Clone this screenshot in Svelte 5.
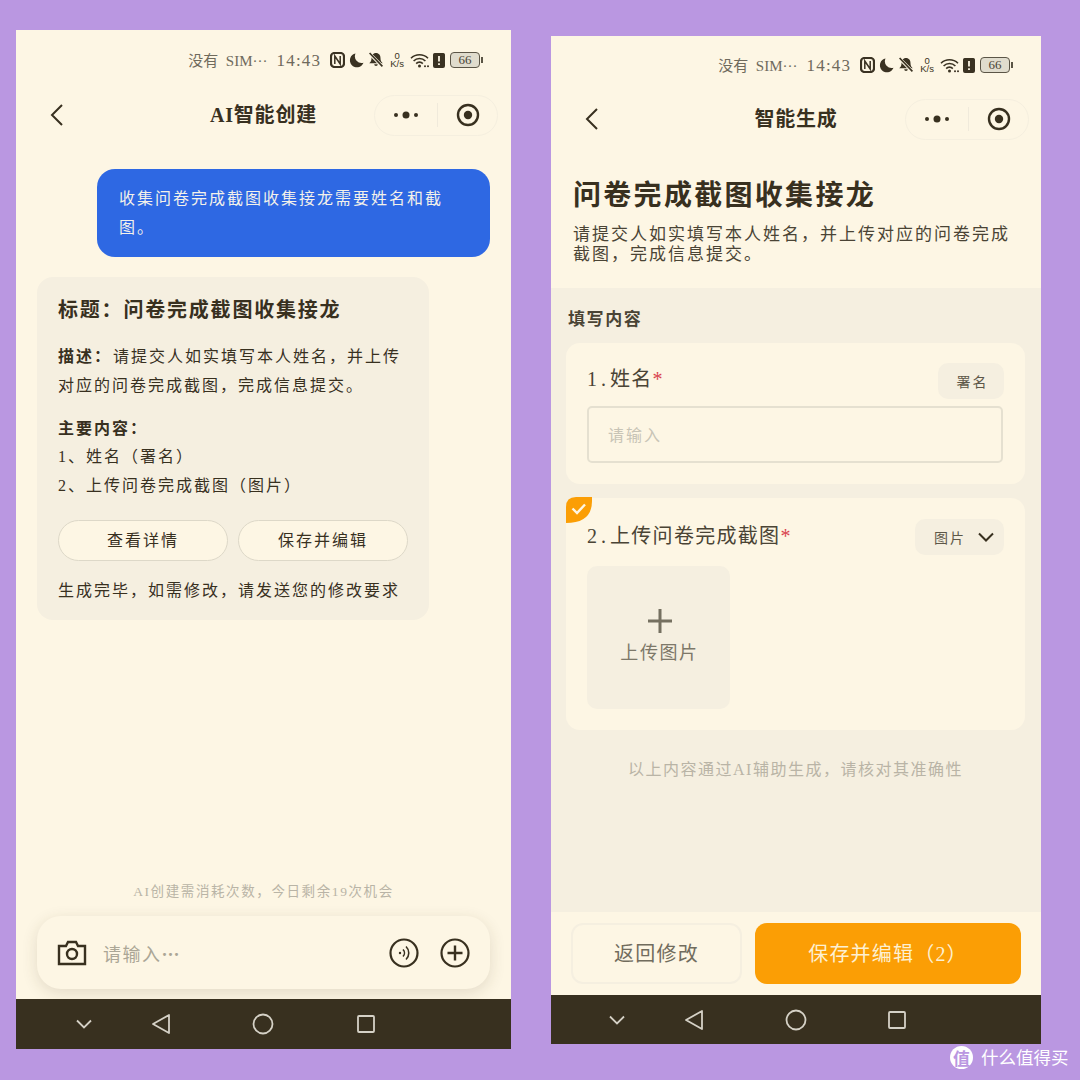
<script>
  const contents = ['1、姓名（署名）', '2、上传问卷完成截图（图片）'];
</script>

{#snippet statusBar()}
  <div class="status">
    <span class="carrier">没有&nbsp; SIM···</span>
    <span class="clock">14:43</span>
    <svg class="st" width="15" height="16" viewBox="0 0 15 16">
      <rect x="1" y="1" width="13" height="14" rx="3.500" fill="none" stroke="#3a3222" stroke-width="2.200" />
      <path d="M4.800 12V4l5.400 8V4" fill="none" stroke="#3a3222" stroke-width="1.500" />
    </svg>
    <svg class="st" width="15" height="15" viewBox="0 0 15 15">
      <path d="M6.500 .5a7 7 0 1 0 8 9.300A6.800 6.800 0 0 1 6.500 .5z" fill="#3a3222" />
    </svg>
    <svg class="st" width="16" height="16" viewBox="0 0 15 15">
      <path d="M7.500 1c-2.800 0-4.200 2.200-4.200 4.600 0 2.500-.8 3.700-2.100 4.900h12.600c-1.300-1.200-2.100-2.400-2.100-4.900C11.700 3.200 10.300 1 7.500 1zM5.800 11.500h3.400a1.700 1.700 0 0 1-3.400 0z" fill="#3a3222" />
      <path d="M1.500 1.500l12 12" stroke="#fdf6e4" stroke-width="3" />
      <path d="M1.500 1l12 12.500" stroke="#3a3222" stroke-width="1.500" />
    </svg>
    <span class="speed">0<br />K/s</span>
    <svg class="st" width="19" height="15" viewBox="0 0 19 15">
      <path d="M1 5.300a12 12 0 0 1 17 0M3.600 8a8.200 8.200 0 0 1 11.800 0M6.200 10.600a4.400 4.400 0 0 1 6.600 0" fill="none" stroke="#3a3222" stroke-width="1.600" />
      <circle cx="9.500" cy="13" r="1.500" fill="#3a3222" />
      <circle cx="15" cy="13.300" r="1" fill="#3a3222" />
      <circle cx="18" cy="13.300" r="1" fill="#3a3222" />
    </svg>
    <svg class="st" width="12" height="15" viewBox="0 0 12 15">
      <path d="M2.500 0h7A2 2 0 0 1 12 2v11a2 2 0 0 1-2 2H2a2 2 0 0 1-2-2V2A2 2 0 0 1 2.500 0z" fill="#3a3222" />
      <path d="M6 3v5.500M6 10.300v1.800" stroke="#fdf6e4" stroke-width="1.800" />
    </svg>
    <span class="battery"><span class="level">66</span></span>
  </div>
{/snippet}

{#snippet navBar(title)}
  <div class="nav">
    <svg class="back" width="14" height="24" viewBox="0 0 14 24">
      <path d="M12 2L2 12l10 10" fill="none" stroke="#38301f" stroke-width="2" />
    </svg>
    <h1>{title}</h1>
    <div class="capsule">
      <svg width="26" height="10" viewBox="0 0 26 10">
        <circle cx="3" cy="5" r="2" fill="#38301f" />
        <circle cx="13" cy="5" r="3.500" fill="#38301f" />
        <circle cx="23" cy="5" r="2" fill="#38301f" />
      </svg>
      <i class="sep"></i>
      <svg width="24" height="24" viewBox="0 0 24 24">
        <circle cx="12" cy="12" r="10" fill="none" stroke="#38301f" stroke-width="2.400" />
        <circle cx="12" cy="12" r="4.200" fill="#38301f" />
      </svg>
    </div>
  </div>
{/snippet}

{#snippet sysNav()}
  <div class="sysnav">
    <svg width="18" height="12" viewBox="0 0 18 12">
      <path d="M2 2.500l7 7 7-7" fill="none" stroke="#d5d1c6" stroke-width="1.800" />
    </svg>
    <svg width="20" height="22" viewBox="0 0 20 22">
      <path d="M18 2v18L2 11z" fill="none" stroke="#d5d1c6" stroke-width="1.800" stroke-linejoin="round" />
    </svg>
    <svg width="22" height="22" viewBox="0 0 22 22">
      <circle cx="11" cy="11" r="9.500" fill="none" stroke="#d5d1c6" stroke-width="1.800" />
    </svg>
    <svg width="20" height="20" viewBox="0 0 20 20">
      <rect x="2" y="2" width="16" height="16" rx="1" fill="none" stroke="#d5d1c6" stroke-width="1.800" />
    </svg>
  </div>
{/snippet}

<div class="page">
  <section class="phone chat">
    {@render statusBar()}
    {@render navBar('AI智能创建')}
    <main class="thread">
      <div class="bubble">收集问卷完成截图收集接龙需要姓名和截图。</div>
      <article class="reply">
        <h2>标题：问卷完成截图收集接龙</h2>
        <p class="desc"><b>描述：</b>请提交人如实填写本人姓名，并上传对应的问卷完成截图，完成信息提交。</p>
        <p class="list-title"><b>主要内容：</b></p>
        {#each contents as line}
          <p class="list-row">{line}</p>
        {/each}
        <div class="actions">
          <button>查看详情</button>
          <button>保存并编辑</button>
        </div>
        <p class="done">生成完毕，如需修改，请发送您的修改要求</p>
      </article>
      <p class="quota">AI创建需消耗次数，今日剩余19次机会</p>
      <div class="composer">
        <svg width="30" height="26" viewBox="0 0 30 26">
          <path d="M2 6h7l2-4h8l2 4h7v18H2z" fill="none" stroke="#38301f" stroke-width="2.400" />
          <circle cx="15" cy="14" r="5" fill="none" stroke="#38301f" stroke-width="2.400" />
        </svg>
        <span class="placeholder">请输入<span class="dots">···</span></span>
        <svg width="30" height="30" viewBox="0 0 30 30">
          <circle cx="15" cy="15" r="13.500" fill="none" stroke="#38301f" stroke-width="2.200" />
          <circle cx="11" cy="15" r="1.200" fill="#38301f" />
          <path d="M14 11.500a5 5 0 0 1 0 7M17 8.500a9 9 0 0 1 0 13" fill="none" stroke="#38301f" stroke-width="1.600" />
        </svg>
        <svg width="30" height="30" viewBox="0 0 30 30">
          <circle cx="15" cy="15" r="13.500" fill="none" stroke="#38301f" stroke-width="2.200" />
          <path d="M15 7.500v15M7.500 15h15" stroke="#38301f" stroke-width="2.400" />
        </svg>
      </div>
    </main>
    {@render sysNav()}
  </section>

  <section class="phone form">
    {@render statusBar()}
    {@render navBar('智能生成')}
    <header class="head">
      <h2>问卷完成截图收集接龙</h2>
      <p>请提交人如实填写本人姓名，并上传对应的问卷完成截图，完成信息提交。</p>
    </header>
    <main class="fields">
      <h3>填写内容</h3>
      <div class="field">
        <div class="field-top">
          <span class="label"><span class="num">1.</span>姓名<em>*</em></span>
          <span class="chip">署名</span>
        </div>
        <div class="input">请输入</div>
      </div>
      <div class="field second">
        <span class="badge">
          <svg width="26" height="26" viewBox="0 0 26 26">
            <path d="M0 26V10Q0 0 10 0H26V4Q26 26 0 26z" fill="#fb9e05" />
            <path d="M6.500 11.500l4.500 4.500 8-8.500" fill="none" stroke="#fdf6e4" stroke-width="2.400" />
          </svg>
        </span>
        <div class="field-top">
          <span class="label"><span class="num">2.</span>上传问卷完成截图<em>*</em></span>
          <span class="chip select">
            图片
            <svg width="18" height="10" viewBox="0 0 18 10">
              <path d="M2 1.500l7 7 7-7" fill="none" stroke="#38301f" stroke-width="2" />
            </svg>
          </span>
        </div>
        <div class="upload">
          <svg width="26" height="26" viewBox="0 0 26 26">
            <path d="M13 1v24M1 13h24" stroke="#757060" stroke-width="3" />
          </svg>
          <span>上传图片</span>
        </div>
      </div>
      <p class="note">以上内容通过AI辅助生成，请核对其准确性</p>
    </main>
    <footer class="bottom">
      <button class="ghost">返回修改</button>
      <button class="primary">保存并编辑（2）</button>
    </footer>
    {@render sysNav()}
  </section>

  <div class="mark">
    <span class="seal">值</span>
    <span>什么值得买</span>
  </div>
</div>

<style>
  :global(body) {
    background: #ba97e1;
  }

  .page {
    position: relative;
    width: 1080px;
    height: 1080px;
    box-sizing: border-box;
    padding-left: 16px;
    display: flex;
    align-items: center;
    gap: 40px;
    background: #ba97e1;
    color: #38301f;
    font-family: "Liberation Serif", "Noto Sans CJK SC", serif;
    overflow: hidden;
  }

  h1, h2, h3, p {
    margin: 0;
  }

  .phone {
    display: flex;
    flex-direction: column;
    background: #fdf6e4;
  }

  .chat {
    width: 495px;
    height: 1019px;
    margin-top: -1px;
  }

  .form {
    width: 490px;
    height: 1008px;
  }

  /* status bar */
  .status {
    height: 60px;
    flex: none;
    display: flex;
    align-items: center;
    justify-content: flex-end;
    padding-right: 31px;
    gap: 4px;
    color: #6f6a5c;
    font-size: 15px;
  }

  .form .status {
    height: 58px;
  }

  .carrier {
    margin-right: 5px;
    padding-bottom: 2px;
  }

  .clock {
    font-size: 17px;
    letter-spacing: 1.200px;
    margin-right: 5px;
    padding-top: 2px;
  }

  .st {
    display: block;
  }

  .speed {
    font-family: "Liberation Sans", sans-serif;
    font-size: 9.500px;
    line-height: 8.500px;
    text-align: center;
    color: #3a3222;
    margin: 0 2px;
  }

  .battery {
    width: 28px;
    height: 14px;
    border: 1px solid #5b5546;
    border-radius: 4px;
    background: #e0dccd;
    position: relative;
    display: flex;
    align-items: center;
    justify-content: center;
    margin-left: 1px;
  }

  .battery::after {
    content: "";
    position: absolute;
    right: -4px;
    top: 4px;
    width: 2px;
    height: 6px;
    background: #5b5546;
  }

  .level {
    font-size: 13px;
    color: #4a4435;
  }

  /* title bar */
  .nav {
    position: relative;
    height: 50px;
    flex: none;
    display: flex;
    align-items: center;
    justify-content: space-between;
    padding: 0 13px 0 34px;
  }

  .form .nav {
    padding-right: 12px;
  }

  h1 {
    position: absolute;
    left: 0;
    right: 0;
    text-align: center;
    font-size: 20px;
    line-height: 24px;
    padding-bottom: 1px;
    font-weight: 700;
    letter-spacing: 0.800px;
  }

  .capsule {
    position: relative;
    width: 124px;
    height: 41px;
    box-sizing: border-box;
    border: 1px solid #f5efdf;
    border-radius: 21px;
    display: flex;
    align-items: center;
    justify-content: space-between;
    padding: 0 17px 0 18px;
  }

  .sep {
    width: 1px;
    height: 24px;
    background: #f0eadb;
  }

  /* chat screen */
  .thread {
    flex: 1;
    display: flex;
    flex-direction: column;
    padding: 29px 21px 10px;
  }

  .bubble {
    margin-left: 60px;
    height: 88px;
    box-sizing: border-box;
    padding: 15px 22px;
    border-radius: 18px;
    background: #2e68e3;
    color: #f3f1ea;
    font-size: 16px;
    line-height: 29px;
    letter-spacing: 2px;
  }

  .reply {
    margin-top: 20px;
    width: 392px;
    height: 343px;
    box-sizing: border-box;
    padding: 19px 21px 0;
    border-radius: 16px;
    background: #f5efe0;
    font-size: 16px;
    line-height: 29px;
    letter-spacing: 2px;
  }

  .reply h2 {
    font-size: 20px;
    line-height: 29px;
    font-weight: 700;
    letter-spacing: 1.800px;
  }

  .desc {
    margin-top: 17px;
    margin-bottom: 14px;
  }

  .desc b {
    margin-right: 1px;
  }

  .list-title {
    margin-bottom: -1px;
  }

  .actions {
    display: flex;
    gap: 10px;
    margin: 20px 0 15px;
  }

  .actions button {
    flex: 1;
    height: 41px;
    padding: 0;
    border: 1px solid #ddd8c8;
    border-radius: 21px;
    background: #fdf6e4;
    color: #38301f;
    font: inherit;
    letter-spacing: 2px;
  }

  .quota {
    margin-top: auto;
    text-align: center;
    font-size: 13.500px;
    line-height: 20px;
    letter-spacing: 1.600px;
    color: #b9b4a6;
  }

  .composer {
    margin-top: 14px;
    height: 73px;
    box-sizing: border-box;
    padding: 0 20px 0 20px;
    border-radius: 24px;
    background: #fdf6e4;
    box-shadow: 0 4px 16px rgba(70, 60, 30, 0.14);
    display: flex;
    align-items: center;
    gap: 21px;
  }

  .composer svg:first-child {
    margin-right: -5px;
  }

  .placeholder {
    flex: 1;
    font-size: 18px;
    letter-spacing: 1.500px;
    color: #aba696;
  }

  .dots {
    letter-spacing: 0;
    font-weight: 700;
  }

  /* form screen */
  .head {
    height: 144px;
    flex: none;
    box-sizing: border-box;
    padding: 33px 22px 0;
  }

  .head h2 {
    font-size: 28px;
    line-height: 38px;
    font-weight: 700;
    letter-spacing: 2.300px;
  }

  .head p {
    margin-top: 10px;
    font-size: 17px;
    line-height: 20px;
    letter-spacing: 2px;
    color: #4a4435;
  }

  .fields {
    flex: 1;
    padding: 0 16px 0 15px;
    background: #f5efe0;
  }

  .fields h3 {
    height: 55px;
    line-height: 63px;
    padding-left: 2px;
    font-size: 17px;
    font-weight: 700;
    letter-spacing: 1.600px;
    color: #4a4435;
  }

  .field {
    position: relative;
    height: 141px;
    box-sizing: border-box;
    padding: 20px 21px;
    border-radius: 14px;
    background: #fdf6e4;
  }

  .second {
    margin-top: 14px;
    height: 232px;
    padding-top: 22px;
  }

  .badge {
    position: absolute;
    left: 0;
    top: -1px;
    line-height: 0;
  }

  .field-top {
    height: 36px;
    display: flex;
    justify-content: space-between;
    align-items: flex-start;
  }

  .label {
    font-size: 20px;
    line-height: 32px;
    letter-spacing: 1.300px;
    color: #4a4435;
  }

  .num {
    letter-spacing: 4px;
  }

  .label em {
    font-style: normal;
    color: #d9434e;
    letter-spacing: 0;
  }

  .chip {
    width: 66px;
    height: 36px;
    flex: none;
    border-radius: 10px;
    background: #f5efe0;
    display: flex;
    align-items: center;
    justify-content: center;
    font-size: 14px;
    letter-spacing: 2px;
    color: #5d5748;
    box-sizing: border-box;
    padding-left: 3px;
  }

  .second .chip {
    margin-top: -1px;
  }

  .select {
    width: 89px;
    justify-content: space-between;
    padding: 0 9px 0 19px;
  }

  .input {
    margin: 7px 1px 0 0;
    height: 57px;
    box-sizing: border-box;
    padding: 0 0 2px 19px;
    border: 2px solid #e5e0d0;
    border-radius: 5px;
    display: flex;
    align-items: center;
    font-size: 16px;
    letter-spacing: 2px;
    color: #c8c4b6;
  }

  .upload {
    margin-top: 10px;
    width: 143px;
    height: 143px;
    border-radius: 10px;
    background: #f5efe0;
    display: flex;
    flex-direction: column;
    align-items: center;
    padding: 42px 0 0 2px;
    box-sizing: border-box;
    gap: 4px;
    font-size: 18px;
    letter-spacing: 1.600px;
    color: #7d7869;
  }

  .note {
    margin-top: 29px;
    text-align: center;
    font-size: 16px;
    line-height: 22px;
    letter-spacing: 1.500px;
    color: #b9b4a6;
  }

  .bottom {
    height: 83px;
    flex: none;
    box-sizing: border-box;
    display: flex;
    gap: 13px;
    padding: 11px 20px 11px;
  }

  .bottom button {
    padding: 0 0 3px;
    border-radius: 12px;
    font: inherit;
    font-size: 20px;
    letter-spacing: 1.200px;
  }

  .ghost {
    width: 171px;
    border: 2px solid #f5efe0;
    background: #fdf6e4;
    color: #716c5d;
  }

  .primary {
    flex: 1;
    border: 0;
    background: #fb9e05;
    color: #fdf0d2;
  }

  /* system navigation */
  .sysnav {
    height: 50px;
    flex: none;
    display: flex;
    align-items: center;
    padding-left: 59px;
    background: #38301f;
    gap: 58px;
  }

  .sysnav svg:nth-child(3) {
    margin-left: 23px;
  }

  .sysnav svg:nth-child(4) {
    margin-left: 24px;
  }

  .form .sysnav {
    height: 49px;
    padding-left: 57px;
  }

  .form .sysnav svg:nth-child(4) {
    margin-left: 22px;
  }

  .mark {
    position: absolute;
    left: 950px;
    top: 1045px;
    display: flex;
    align-items: center;
    gap: 8px;
    font-family: "Noto Sans CJK SC", sans-serif;
    font-size: 17.500px;
    line-height: 24px;
    color: #fff;
  }

  .seal {
    width: 23px;
    height: 23px;
    border-radius: 50%;
    background: #fff;
    color: #ba97e1;
    font-size: 17px;
    font-weight: 700;
    line-height: 23px;
    text-align: center;
  }
</style>
